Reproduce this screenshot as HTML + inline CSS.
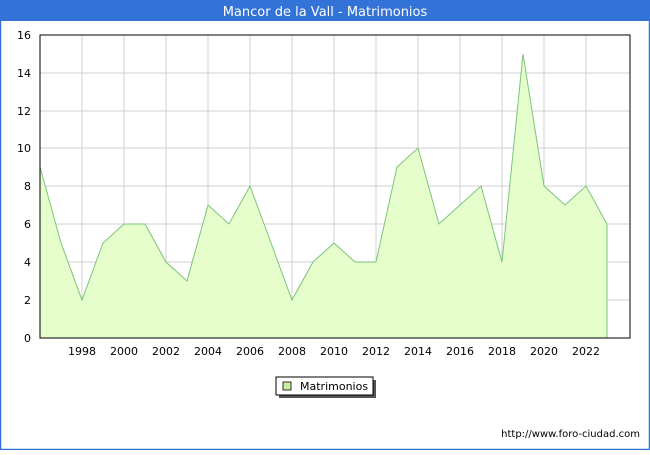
<!DOCTYPE html>
<html><head><style>
body{margin:0;width:650px;height:450px;overflow:hidden;background:#fff;font-family:"Liberation Sans","DejaVu Sans",sans-serif}
</style></head><body>
<svg width="650" height="450" xmlns="http://www.w3.org/2000/svg" font-family="DejaVu Sans, Liberation Sans, sans-serif">
<rect x="0" y="0" width="650" height="450" fill="#fff"/>
<rect x="0.5" y="0.5" width="649" height="449" fill="none" stroke="#3372d6" stroke-width="1.5"/>
<rect x="0" y="0" width="650" height="21" fill="#3372d6"/>
<text x="325" y="16" fill="#fff" font-size="13" text-anchor="middle">Mancor de la Vall - Matrimonios</text>
<g stroke="#d0d0d0" stroke-width="1">
<line x1="40" y1="300" x2="630" y2="300"/><line x1="40" y1="262" x2="630" y2="262"/><line x1="40" y1="224" x2="630" y2="224"/><line x1="40" y1="186" x2="630" y2="186"/><line x1="40" y1="148" x2="630" y2="148"/><line x1="40" y1="111" x2="630" y2="111"/><line x1="40" y1="73" x2="630" y2="73"/>
<line x1="82" y1="35" x2="82" y2="338"/><line x1="124" y1="35" x2="124" y2="338"/><line x1="166" y1="35" x2="166" y2="338"/><line x1="208" y1="35" x2="208" y2="338"/><line x1="250" y1="35" x2="250" y2="338"/><line x1="292" y1="35" x2="292" y2="338"/><line x1="334" y1="35" x2="334" y2="338"/><line x1="376" y1="35" x2="376" y2="338"/><line x1="418" y1="35" x2="418" y2="338"/><line x1="460" y1="35" x2="460" y2="338"/><line x1="502" y1="35" x2="502" y2="338"/><line x1="544" y1="35" x2="544" y2="338"/><line x1="586" y1="35" x2="586" y2="338"/>
</g>
<polygon fill="#e6fdcc" stroke="#7cc47c" stroke-width="1" points="40,338 40,167 61,243 82,300 103,243 124,224 145,224 166,262 187,281 208,205 229,224 250,186 271,243 292,300 313,262 334,243 355,262 376,262 397,167 418,148 439,224 460,205 481,186 502,262 523,54 544,186 565,205 586,186 607,224 607,338"/>
<rect x="40" y="35" width="590" height="303" fill="none" stroke="#000" stroke-width="1"/>
<g font-size="11" fill="#000" text-anchor="end">
<text x="31" y="342">0</text><text x="31" y="304">2</text><text x="31" y="266">4</text><text x="31" y="228">6</text><text x="31" y="190">8</text><text x="31" y="152">10</text><text x="31" y="115">12</text><text x="31" y="77">14</text><text x="31" y="39">16</text>
</g>
<g font-size="11" fill="#000" text-anchor="middle">
<text x="82" y="355">1998</text><text x="124" y="355">2000</text><text x="166" y="355">2002</text><text x="208" y="355">2004</text><text x="250" y="355">2006</text><text x="292" y="355">2008</text><text x="334" y="355">2010</text><text x="376" y="355">2012</text><text x="418" y="355">2014</text><text x="460" y="355">2016</text><text x="502" y="355">2018</text><text x="544" y="355">2020</text><text x="586" y="355">2022</text>
</g>
<rect x="279" y="380" width="97" height="18" fill="#555"/>
<rect x="276" y="377" width="97" height="18" fill="#fff" stroke="#000" stroke-width="1"/>
<rect x="283" y="382" width="8" height="8" fill="#c8f0a0" stroke="#000" stroke-width="0.8"/>
<text x="300" y="390" font-size="11">Matrimonios</text>
<text x="640" y="437" font-size="10" text-anchor="end">http://www.foro-ciudad.com</text>
</svg>
</body></html>
